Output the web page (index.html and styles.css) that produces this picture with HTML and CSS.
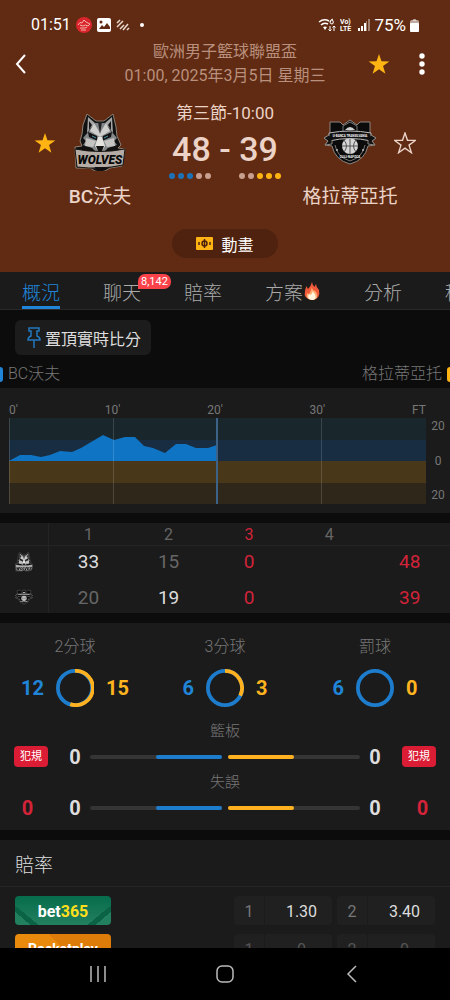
FILE: index.html
```html
<!DOCTYPE html>
<html lang="zh-Hant">
<head>
  <meta charset="UTF-8">
  <meta name="viewport" content="width=device-width, initial-scale=1">
  <title>BC沃夫 - 格拉蒂亞托</title>
  <link rel="stylesheet" href="styles.css">
</head>
<body>

<svg class="defs" aria-hidden="true">
  <symbol id="star" viewBox="0 0 24 24"><path d="M12 1l2.700 8.100 8.600.100-6.900 5.100 2.600 8.300-7-5-7 5 2.600-8.300L.7 9.200l8.600-.1z"/></symbol>

  <symbol id="wolves" viewBox="0 0 52 58">
    <path d="M13 1l9 7h8l9-7 3 13 1 9 4 9-3 3 7 1-3 17-12 2q-10 8-20 0L2 55 1 34l7-1-2-5 2-7 1-9z" fill="#111" stroke="#8d8177" stroke-width="1"/>
    <path d="M14 4l7 6-5 6-3 4zM38 4l-7 6 5 6 3 4z" fill="#a5a5a5"/>
    <path d="M15 8l3 4-3 5zM37 8l-3 4 3 5z" fill="#151515"/>
    <path d="M21 10h10l6 8 6 7-3 3 3 4-9 3-4 4h-8l-4-4-9-3 3-4-3-3 6-7z" fill="#85888a"/>
    <path d="M20 10l6 10 6-10 4 8-10 6-10-6z" fill="#cfcfcd"/>
    <path d="M24 9h4l-2 12z" fill="#222"/>
    <path d="M12 25l10 3-3 6-8-1zM40 25l-10 3 3 6 8-1z" fill="#c4c4c2"/>
    <path d="M14 19l9 4 1 5-9-4zM38 19l-9 4-1 5 9-4z" fill="#111"/>
    <path d="M18 23l4 2M34 23l-4 2" stroke="#4b9db5" stroke-width="1"/>
    <path d="M24 24h4l3 9-3 5h-4l-3-5z" fill="#e4e2df"/>
    <path d="M22 33h8l-2 5h-4z" fill="#111"/>
    <path d="M1 36q25 5 50 0l-2 16q-23 5-46 2z" fill="#b5ada5" stroke="#191512" stroke-width="1"/>
    <text x="26" y="51" text-anchor="middle" font-family="Roboto, sans-serif" font-size="12" font-weight="900" font-style="italic" fill="#080808">WOLVES</text>
    <path d="M20 54h12q-6 6-12 0z" fill="#111"/>
  </symbol>

  <symbol id="gladiators" viewBox="0 0 54 46">
    <path d="M7 3h10l3 3 7-5 7 5 3-3h10v13l6 3-4 3 3 4-7 1q-3 14-18 18Q12 41 9 27l-7-1 3-4-4-3 6-3z" fill="#0b0b0b" stroke="#8d8580" stroke-width="1"/>
    <path d="M20 13V7l7-4 7 4v6q-7-2-14 0z" fill="#0b0b0b" stroke="#777" stroke-width="1"/>
    <path d="M22 11q5-6 10 0" fill="#cfcfcf"/>
    <path d="M12 26q2 12 15 16 13-4 15-16" fill="none" stroke="#777" stroke-width="1"/>
    <circle cx="27" cy="27" r="8" fill="#d6d6d6"/>
    <path d="M27 19v16M19 27h16M21 21q5 6 0 12M33 21q-5 6 0 12" fill="none" stroke="#555" stroke-width="1"/>
    <path d="M6 14q21-4 42 0v8q-21-5-42 0z" fill="#111" stroke="#bbb" stroke-width="1"/>
    <path d="M6 16l-5 3 4 3-3 4 7-1v-4M48 16l5 3-4 3 3 4-7-1v-4" fill="#111" stroke="#8d8580" stroke-width="1"/>
    <text x="27" y="18" text-anchor="middle" font-family="Roboto, sans-serif" font-size="3" font-weight="700" fill="#fff">U-BANCA TRANSILVANIA</text>
    <text x="27" y="39" text-anchor="middle" font-family="Roboto, sans-serif" font-size="3" font-weight="700" fill="#fff">CLUJ-NAPOCA</text>
    <circle cx="14" cy="31" r="1" fill="#bbb"/><circle cx="40" cy="31" r="1" fill="#bbb"/>
  </symbol>
</svg>

<div class="app">
  <header class="header">
    <div class="status">
      <span class="status-time">01:51</span>
      <svg width="16" height="16" viewBox="0 0 16 16"><circle cx="8" cy="8" r="8" fill="#d9252b"/><path d="M2 8q2-4 4-2l2-3 2 2 4 2-2 2q-3-2-5 0l-3-1M4 11h5l2-1M5 13h5" fill="none" stroke="#f3b5a8" stroke-width="1"/></svg>
      <svg width="14" height="14" viewBox="0 0 14 14"><rect width="14" height="14" rx="2" fill="#fff"/><circle cx="4" cy="4" r="1.500" fill="#602b12"/><path d="M2 11l3-4 2 2 3-4 3 4v2z" fill="#602b12"/></svg>
      <svg width="14" height="12" viewBox="0 0 14 12"><path d="M1 4l3-3M1 8l6-6M4 10l4-4M7 11l5-6M11 11l2-2" stroke="#e9d9cf" stroke-width="1.500" fill="none"/></svg>
      <i class="status-dot"></i>
      <span class="status-right">
        <svg width="18" height="14" viewBox="0 0 18 14" fill="none" stroke="#fff"><path d="M1 4q5-4 10-1M3 7q3-3 7-1" stroke-width="1.500"/><path d="M5 9q2-1 4 0l-2 3z" fill="#fff" stroke="none"/><path d="M15 1q-3 1-3 3t2 2 1-3-3 1" stroke-width="1"/><path d="M12 8v5M10.500 11.500L12 13l1.500-1.500M16 13V8M14.500 9.500L16 8l1.500 1.500" stroke-width="1"/></svg>
        <svg width="14" height="14" viewBox="0 0 14 14" fill="#fff" font-family="Roboto, sans-serif" font-weight="700" font-size="7"><text x="0" y="6">Vo)</text><text x="0" y="13">LTE</text></svg>
        <svg width="12" height="12" viewBox="0 0 12 12" fill="#fff"><path d="M0 9h2v3H0zM3 7h2v5H3zM6 4h2v8H6z"/><path d="M8 2h1v10H8zM10 0h2v12h-2z" opacity=".4"/></svg>
        <span class="status-battery">75%</span>
        <svg width="9" height="13" viewBox="0 0 9 13" fill="#fff"><path d="M3 0h3v2H3z" opacity=".5"/><rect y="1" width="9" height="12" rx="2" opacity=".6"/><rect y="4" width="9" height="9" rx="1"/></svg>
      </span>
    </div>

    <div class="topbar">
      <button class="icon-btn" aria-label="返回"><svg width="12" height="20" viewBox="0 0 12 20"><path d="M10 1L2 10l8 9" fill="none" stroke="#fff" stroke-width="2"/></svg></button>
      <div class="league">歐洲男子籃球聯盟盃<br>01:00, 2025年3月5日 星期三</div>
      <div class="topbar-actions">
        <button class="icon-btn" aria-label="收藏"><svg width="22" height="22" class="gold"><use href="#star"/></svg></button>
        <button class="icon-btn" aria-label="更多"><svg width="6" height="22" viewBox="0 0 6 22" fill="#fff"><circle cx="3" cy="3" r="2.700"/><circle cx="3" cy="11" r="2.700"/><circle cx="3" cy="19" r="2.700"/></svg></button>
      </div>
    </div>

    <div class="match">
      <button class="icon-btn fav" aria-label="收藏主隊"><svg width="22" height="22" class="gold"><use href="#star"/></svg></button>
      <div class="team">
        <div class="team-logo"><svg width="52" height="58"><use href="#wolves"/></svg></div>
        <div class="team-name"><b>BC</b>沃夫</div>
      </div>
      <div class="score">
        <div class="period">第三節-10:00</div>
        <div class="points">48 - 39</div>
        <div class="dots">
          <span><i class="blue"></i><i class="blue"></i><i class="blue"></i><i></i><i></i></span>
          <span><i></i><i></i><i class="amber"></i><i class="amber"></i><i class="amber"></i></span>
        </div>
      </div>
      <div class="team">
        <div class="team-logo"><svg width="54" height="46"><use href="#gladiators"/></svg></div>
        <div class="team-name">格拉蒂亞托</div>
      </div>
      <button class="icon-btn fav" aria-label="收藏客隊"><svg width="22" height="22" class="hollow"><use href="#star"/></svg></button>
    </div>

    <button class="animate">
      <svg width="17" height="13" viewBox="0 0 17 13"><rect width="17" height="13" rx="1" fill="#ffb414"/><path d="M8.500 2v9M3 5v3M14 5v3" stroke="#4f220f" stroke-width="1.500"/><circle cx="8.500" cy="6.500" r="2.500" fill="none" stroke="#4f220f" stroke-width="1.500"/></svg>
      動畫
    </button>
  </header>

  <nav class="tabs">
    <a href="#" class="active">概況</a>
    <a href="#">聊天<span class="count">8,142</span></a>
    <a href="#">賠率</a>
    <a href="#">方案<svg width="18" height="20" viewBox="0 0 18 20"><path d="M9 1q0 3 3 5 0-2 1-3 0 3 3 6 2 9-7 10Q0 18 2 10q0-3 2-5 0 3 1 3Q8 5 9 1z" fill="#f0593a"/><path d="M9 6q0 3 3 4l1 1q4 7-4 8-7-1-5-7l2 1q2-3 3-7z" fill="#ffad72"/><path d="M10 10q0 2 2 3 2 6-3 6-6-1-3-6l1 1q2-1 3-4z" fill="#fff5df"/></svg></a>
    <a href="#">分析</a>
    <a href="#">積分</a>
  </nav>

  <main class="content">
    <button class="pin">
      <svg width="14" height="22" viewBox="0 0 14 22" fill="none" stroke="#2277bd" stroke-width="1.500"><path d="M2 1h10v3h-2v5q3 1 3 4H1q0-3 3-4V4H2zM7 13v8"/></svg>
      置頂實時比分
    </button>

    <div class="legend">
      <span class="home">BC沃夫</span>
      <span class="away">格拉蒂亞托</span>
    </div>

    <section class="card chart">
      <div class="chart-x"><span>0'</span><span>10'</span><span>20'</span><span>30'</span><span>FT</span></div>
      <svg class="plot" viewBox="0 0 417 86" preserveAspectRatio="none">
        <rect width="417" height="22" fill="#19262c"/>
        <rect y="22" width="417" height="21" fill="#182d42"/>
        <rect y="43" width="417" height="22" fill="#49371a"/>
        <rect y="65" width="417" height="21" fill="#30271b"/>
        <path d="M0 43l11-6h11l10 2 9-2 10-4 12 1 9-4 22-13 11 5 11-3h10l9 9 9 2 12 5 11-9h10l10 4h12l9-3v16z" fill="#1074c4"/>
        <path d="M104 0h1v86h-1zM312 0h1v86h-1zM0 0h1v86H0z" fill="#fff" opacity=".15"/>
        <path d="M207 0h2v86h-2z" fill="#3c6287"/>
      </svg>
      <div class="chart-y"><span>20</span><span>0</span><span>20</span></div>
    </section>

    <section class="card">
      <table class="quarters">
        <thead>
          <tr><th></th><th>1</th><th>2</th><th class="red">3</th><th>4</th><th></th></tr>
        </thead>
        <tbody>
          <tr>
            <td><svg width="18" height="20"><use href="#wolves"/></svg></td>
            <td class="win">33</td><td>15</td><td class="red">0</td><td></td><td class="red">48</td>
          </tr>
          <tr>
            <td><svg width="18" height="16"><use href="#gladiators"/></svg></td>
            <td>20</td><td class="win">19</td><td class="red">0</td><td></td><td class="red">39</td>
          </tr>
        </tbody>
      </table>
    </section>

    <section class="card stats">
      <div class="rings">
        <div>
          <h3>2分球</h3>
          <div class="ring-row">
            <b class="home-num">12</b>
            <svg width="38" height="38" viewBox="0 0 40 40" fill="none" stroke-width="4"><circle cx="20" cy="20" r="18" stroke="#1d7ccb"/><path d="M20 2a18 18 0 1 1-5 35" stroke="#ffb120"/></svg>
            <b class="away-num">15</b>
          </div>
        </div>
        <div>
          <h3>3分球</h3>
          <div class="ring-row">
            <b class="home-num">6</b>
            <svg width="38" height="38" viewBox="0 0 40 40" fill="none" stroke-width="4"><circle cx="20" cy="20" r="18" stroke="#1d7ccb"/><path d="M20 2a18 18 0 0 1 16 26" stroke="#ffb120"/></svg>
            <b class="away-num">3</b>
          </div>
        </div>
        <div>
          <h3>罰球</h3>
          <div class="ring-row">
            <b class="home-num">6</b>
            <svg width="38" height="38" viewBox="0 0 40 40" fill="none" stroke-width="4"><circle cx="20" cy="20" r="18" stroke="#1d7ccb"/></svg>
            <b class="away-num">0</b>
          </div>
        </div>
      </div>

      <h4>籃板</h4>
      <div class="bar-row">
        <span class="foul">犯規</span><b>0</b>
        <div class="bar home"><i style="width: 50%"></i></div>
        <div class="bar away"><i style="width: 50%"></i></div>
        <b>0</b><span class="foul">犯規</span>
      </div>
      <h4>失誤</h4>
      <div class="bar-row">
        <b class="foul-num">0</b><b>0</b>
        <div class="bar home"><i style="width: 50%"></i></div>
        <div class="bar away"><i style="width: 50%"></i></div>
        <b>0</b><b class="foul-num">0</b>
      </div>
    </section>

    <section class="card odds">
      <h2>賠率</h2>
      <div class="odds-row">
        <a href="#" class="book bet365">bet<em>365</em></a>
        <button class="odd"><span>1</span><span>1.30</span></button>
        <button class="odd"><span>2</span><span>3.40</span></button>
      </div>
      <div class="odds-row">
        <a href="#" class="book orange">Rocketplay</a>
        <button class="odd faded"><span>1</span><span>0</span></button>
        <button class="odd faded"><span>2</span><span>0</span></button>
      </div>
    </section>
  </main>

  <footer class="sysnav">
    <button class="icon-btn" aria-label="最近"><svg width="18" height="18" viewBox="0 0 18 18"><path d="M2 1v16M9 1v16M16 1v16" stroke="#bbb" stroke-width="1.500"/></svg></button>
    <button class="icon-btn" aria-label="主畫面"><svg width="18" height="18" viewBox="0 0 18 18"><rect x="1" y="1" width="16" height="16" rx="5" fill="none" stroke="#bbb" stroke-width="1.500"/></svg></button>
    <button class="icon-btn" aria-label="返回"><svg width="18" height="18" viewBox="0 0 18 18"><path d="M13 1L5 9l8 8" fill="none" stroke="#bbb" stroke-width="1.500"/></svg></button>
  </footer>
</div>

</body>
</html>
```

FILE: styles.css
```css
* { box-sizing: border-box; }
body { margin: 0; background: #000; color: #ddd; font-family: Roboto, "Noto Sans CJK TC", sans-serif; }
button { border: none; background: none; padding: 0; color: inherit; font-family: inherit; cursor: pointer; }
a { color: inherit; text-decoration: none; }
svg { display: block; flex: none; }
h2, h3, h4 { margin: 0; font-weight: 300; }
.defs { position: absolute; width: 0; height: 0; }
.app { display: flex; flex-direction: column; height: 100vh; overflow: hidden; }

/* header */
.header { background: #602b12; color: #ecd3c8; padding-bottom: 14px; flex: none; }
.status { display: flex; align-items: center; gap: 5px; padding: 14px 31px 0; line-height: 22px; font-size: 16px; color: #fff; }
.status-right { display: flex; align-items: center; gap: 4px; margin-left: auto; }
.status-battery { font-size: 17px; }
.status-dot { width: 4px; height: 4px; border-radius: 50%; background: #fff; margin-left: 5px; }
.icon-btn { display: flex; align-items: center; justify-content: center; }
.topbar { display: grid; grid-template-columns: 1fr auto 1fr; align-items: center; margin-top: 4px; padding: 0 25px 0 15px; }
.topbar > .icon-btn { justify-self: start; }
.league { text-align: center; line-height: 24px; font-size: 16px; color: #b98f7d; margin-left: 10px; }
.topbar-actions { display: flex; justify-content: flex-end; gap: 29px; }
.gold { fill: #ffb414; }
.hollow { fill: none; stroke: #ecd3c8; stroke-width: 1.5; overflow: visible; }
.match { display: grid; grid-template-columns: 22px minmax(0, 88fr) minmax(0, 162fr) minmax(0, 88fr) 22px; padding: 13px 34px 0; }
.fav { height: 84px; }
.team { display: flex; flex-direction: column; align-items: center; }
.team-logo { display: flex; align-items: center; height: 82px; }
.team-name { line-height: 28px; font-size: 19px; white-space: nowrap; }
.team-name b { font-weight: 500; }
.score { display: flex; flex-direction: column; align-items: center; }
.period { line-height: 24px; font-size: 17px; }
.points { line-height: 40px; font-size: 34px; font-weight: 500; margin-top: 4px; }
.dots { display: flex; justify-content: space-between; width: 112px; margin-top: 4px; }
.dots span { display: flex; gap: 3px; }
.dots i { width: 6px; height: 6px; border-radius: 50%; background: #c99f90; }
.dots .blue { background: #1d73b8; }
.dots .amber { background: #ffb414; }
.animate { display: flex; align-items: center; justify-content: center; gap: 8px; margin: 18px auto 0; padding: 0 24px; height: 29px; border-radius: 15px; background: #4e220f; color: #fff; font-size: 16px; }

/* tabs */
.tabs { display: flex; flex: none; gap: 43px; height: 38px; padding-left: 22px; background: #1b1b1b; border-bottom: 1px solid #292929; overflow: hidden; }
.tabs a { position: relative; display: flex; align-items: center; flex: none; font-size: 19px; font-weight: 300; color: #aaa; border-bottom: 3px solid transparent; padding-top: 4px; }
.tabs .active { color: #2085d8; border-color: #2085d8; }
.tabs .count { position: absolute; left: 35px; top: 2px; padding: 0 3px; border-radius: 7px 7px 7px 0; background: #f9424a; color: #fff; font-size: 11px; line-height: 15px; font-weight: 400; }

/* content */
.content { flex: 1; min-height: 0; overflow: hidden; background: #0c0c0c; }
.pin { display: flex; align-items: center; gap: 4px; height: 35px; margin: 10px 15px 0; padding: 0 10px 0 12px; border-radius: 6px; background: #1c1c1c; color: #ddd; font-size: 16px; }
.legend { display: flex; justify-content: space-between; margin-top: 5px; line-height: 28px; font-size: 16px; font-weight: 300; color: #777; }
.legend span { display: flex; align-items: center; gap: 5px; }
.home::before, .away::after { content: ""; }
.legend .home::before { width: 3px; height: 15px; background: #2085d8; border-radius: 0 3px 3px 0; }
.legend .away::after { width: 3px; height: 15px; background: #ffb414; border-radius: 3px 0 0 3px; }
.card { background: #1b1b1b; margin-bottom: 10px; }

.chart { display: grid; grid-template-columns: 1fr 24px; padding: 15px 0 9px 9px; font-size: 12px; color: #777; }
.chart-x { grid-column: 1; display: flex; justify-content: space-between; line-height: 15px; }
.plot { grid-column: 1; width: 100%; height: 86px; }
.chart-y { display: flex; flex-direction: column; justify-content: space-between; align-items: center; line-height: 17px; }

.quarters { width: 100%; table-layout: fixed; border-collapse: collapse; text-align: center; color: #666; }
.quarters th { height: 22px; padding: 2px 0 0; font-size: 16px; font-weight: 400; line-height: 20px; border-bottom: 1px solid #242424; }
.quarters td { height: 32px; padding: 0; font-size: 19px; }
.quarters tr:last-child td { height: 35px; padding-top: 4px; }
.quarters tr > :first-child { width: 48px; border-right: 1px solid #242424; }
.quarters td svg { margin: auto; filter: grayscale(1); }
.quarters .win { color: #ddd; }
.quarters .red { color: #d22339; }

.stats { padding: 12px 0 8px; }
.rings { display: grid; grid-template-columns: repeat(3, 1fr); }
.rings h3 { text-align: center; font-size: 16px; line-height: 24px; color: #777; }
.ring-row { display: flex; align-items: center; gap: 12px; margin-top: 10px; font-size: 20px; }
.ring-row b { flex: 1; }
.home-num { text-align: right; color: #2085d8; }
.away-num { color: #ffb41f; }
.stats h4 { text-align: center; font-size: 15px; line-height: 23px; color: #777; }
.rings + h4 { margin-top: 13px; }
.bar-row { display: grid; grid-template-columns: 34px 42px 1fr 1fr 42px 34px; align-items: center; padding: 0 14px; height: 28px; text-align: center; font-size: 20px; }
.bar-row .foul + b, .bar-row .foul-num + b { padding-left: 12px; }
.bar + b { padding-right: 12px; }
.foul { height: 21px; border-radius: 4px; background: #da1c34; color: #fff; font-size: 11px; line-height: 21px; }
.foul-num { width: 27px; color: #d22339; }
.foul-num:last-child { justify-self: end; }
.bar { display: flex; height: 4px; border-radius: 2px; background: #353535; }
.bar i { border-radius: 2px; }
.bar.home { justify-content: flex-end; margin-right: 3px; }
.bar.home i { background: #1d7ccb; }
.bar.away { margin-left: 3px; }
.bar.away i { background: #ffb120; }

.odds h2 { padding: 5px 15px 0; font-size: 19px; line-height: 41px; border-bottom: 1px solid #262626; color: #ddd; }
.odds-row { display: flex; align-items: center; gap: 5px; padding: 9px 15px 0; }
.book { width: 96px; height: 29px; margin-right: auto; border-radius: 4px; text-align: center; line-height: 31px; color: #fff; font-size: 16px; font-weight: 700; }
.book em { font-style: normal; color: #ffdf1b; }
.bet365 { background: linear-gradient(40deg, #23805f 12%, #0b6345 12% 18%, transparent 18%), linear-gradient(-40deg, #23805f 12%, #0b6345 12% 18%, transparent 18%), linear-gradient(#066c4b, #23805f); }
.orange { background: linear-gradient(45deg, #e98a0c 50%, #dd7c08 50%); font-size: 14px; }
.odd { display: grid; grid-template-columns: 31px 1fr; width: 98px; height: 29px; border-radius: 4px; background: #202020; font-size: 16px; line-height: 31px; }
.odd span:first-child { color: #777; border-right: 1px solid #1b1b1b; }
.odd span:last-child { padding-left: 6px; }
.odd.faded span { color: #555; }

.sysnav { display: flex; flex: none; justify-content: space-around; height: 52px; padding: 0 35px; background: #000; }
```
